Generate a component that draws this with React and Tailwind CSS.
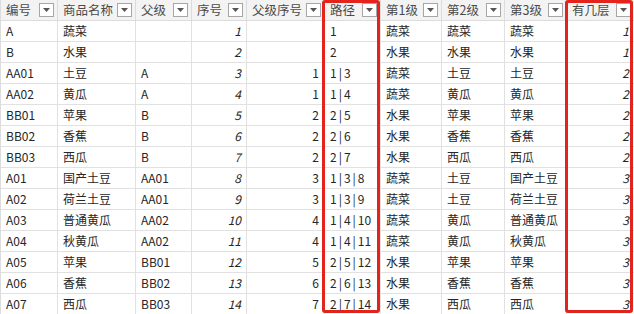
const columns = [
  { title: "编号", align: "left" },
  { title: "商品名称", align: "left" },
  { title: "父级", align: "left" },
  { title: "序号", align: "right", italic: true },
  { title: "父级序号", align: "right" },
  { title: "路径", align: "left", path: true },
  { title: "第1级", align: "left" },
  { title: "第2级", align: "left" },
  { title: "第3级", align: "left" },
  { title: "有几层", align: "right", italic: true },
];

const rows = [
  ["A", "蔬菜", "", "1", "", "1", "蔬菜", "蔬菜", "蔬菜", "1"],
  ["B", "水果", "", "2", "", "2", "水果", "水果", "水果", "1"],
  ["AA01", "土豆", "A", "3", "1", "1|3", "蔬菜", "土豆", "土豆", "2"],
  ["AA02", "黄瓜", "A", "4", "1", "1|4", "蔬菜", "黄瓜", "黄瓜", "2"],
  ["BB01", "苹果", "B", "5", "2", "2|5", "水果", "苹果", "苹果", "2"],
  ["BB02", "香蕉", "B", "6", "2", "2|6", "水果", "香蕉", "香蕉", "2"],
  ["BB03", "西瓜", "B", "7", "2", "2|7", "水果", "西瓜", "西瓜", "2"],
  ["A01", "国产土豆", "AA01", "8", "3", "1|3|8", "蔬菜", "土豆", "国产土豆", "3"],
  ["A02", "荷兰土豆", "AA01", "9", "3", "1|3|9", "蔬菜", "土豆", "荷兰土豆", "3"],
  ["A03", "普通黄瓜", "AA02", "10", "4", "1|4|10", "蔬菜", "黄瓜", "普通黄瓜", "3"],
  ["A04", "秋黄瓜", "AA02", "11", "4", "1|4|11", "蔬菜", "黄瓜", "秋黄瓜", "3"],
  ["A05", "苹果", "BB01", "12", "5", "2|5|12", "水果", "苹果", "苹果", "3"],
  ["A06", "香蕉", "BB02", "13", "6", "2|6|13", "水果", "香蕉", "香蕉", "3"],
  ["A07", "西瓜", "BB03", "14", "7", "2|7|14", "水果", "西瓜", "西瓜", "3"],
];

const FilterButton = () => (
  <span className="flex h-[14px] w-[15px] shrink-0 items-center justify-center border border-[#a6a6a6] bg-white">
    <svg width="7" height="4" viewBox="0 0 7 4">
      <path d="M0 0h7L3.5 4z" fill="#555" />
    </svg>
  </span>
);

const HighlightBox = ({ className }) => (
  <div
    className={`pointer-events-none absolute top-0 h-[313px] rounded-[3px] border-[3px] border-[#e3231c] ${className}`}
  ></div>
);

// 路径 like "1|3|8": give the pipes a little room, as in the sheet
const PathText = ({ value }) =>
  value.split("|").map((part, i) => (
    <span key={i} className="flex items-center">
      {i > 0 && <span className="px-[2px]">|</span>}
      {part}
    </span>
  ));

const App = () => {
  return (
    <div
      name="sheet"
      className="relative h-[314px] w-[634px] overflow-hidden bg-white text-[12px] text-[#262626]"
      style={{ fontFamily: '"Noto Sans CJK SC", "Noto Sans", sans-serif' }}
    >
      <div
        name="grid"
        className="grid grid-cols-[57px_78px_56px_55px_78px_56px_61px_63px_62px_68px] border-l border-[#dcdcdc]"
      >
        {columns.map((col, i) => (
          <div
            key={i}
            className="flex h-[21px] items-center justify-between border-r border-b border-[#dcdcdc] bg-[#f3f3f3] pl-[5px] pr-[3px] text-[12.5px] text-[#4a4a4a]"
          >
            <span className="whitespace-nowrap leading-none">{col.title}</span>
            <FilterButton />
          </div>
        ))}
        {rows.map((row, r) =>
          row.map((cell, c) => (
            <div
              key={`${r}-${c}`}
              className={`flex h-[21px] items-center whitespace-nowrap border-r border-b border-[#e1e1e1] px-[5px] leading-none ${
                columns[c].align === "right" ? "justify-end" : "justify-start"
              } ${columns[c].italic ? "italic" : ""}`}
            >
              {columns[c].path ? <PathText value={cell} /> : cell}
            </div>
          ))
        )}
      </div>
      <HighlightBox className="left-[322px] w-[58px]" />
      <HighlightBox className="left-[565px] w-[68px]" />
    </div>
  );
};

export default App;
